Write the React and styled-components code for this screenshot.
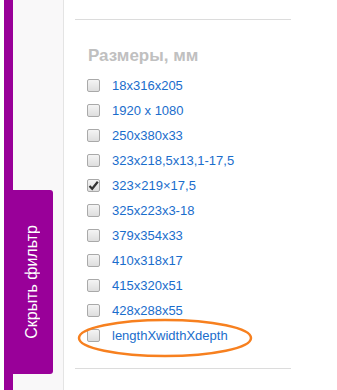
import React from "react";
import styled, { createGlobalStyle } from "styled-components";

const GlobalStyle = createGlobalStyle`
  html, body {
    margin: 0;
    padding: 0;
    background: #fff;
    font-family: "Liberation Sans", Arial, sans-serif;
  }
`;

const Page = styled.div`
  display: flex;
  height: 390px;
  padding-left: 4px;
  overflow: hidden;
`;

const Sidebar = styled.div`
  display: flex;
  flex-direction: column;
  width: 50px;
  border-left: 9px solid #990099;
  border-right: 1px solid #e4e4e4;
  background: #f9f8f9;
`;

const HideTab = styled.div`
  display: flex;
  align-items: center;
  justify-content: center;
  margin-top: 190px;
  width: 40px;
  height: 184px;
  background: #990099;
  border-radius: 0 3px 3px 0;
  color: #fff;
  font-size: 16px;
  cursor: pointer;
`;

const TabLabel = styled.span`
  writing-mode: vertical-rl;
  transform: rotate(180deg);
  white-space: nowrap;
  padding-left: 2px;
`;

const Content = styled.div`
  position: relative;
  display: flex;
  flex-direction: column;
  padding: 19px 0 0 11px;
`;

const Divider = styled.div`
  width: 216px;
  height: 0;
  border-top: 1px solid #dcdcdc;
`;

const Heading = styled.h3`
  margin: 26px 0 8px 13px;
  font-size: 17px;
  line-height: 19px;
  font-weight: bold;
  color: #c0c0c0;
`;

const List = styled.ul`
  list-style: none;
  margin: 0 0 20px 0;
  padding: 0;
`;

const Row = styled.li`
  display: flex;
  align-items: center;
  height: 25px;
  padding-left: 12px;
`;

const Box = styled.span`
  display: flex;
  align-items: center;
  justify-content: center;
  box-sizing: border-box;
  width: 13px;
  height: 13px;
  border: 1px solid #a9a9a9;
  border-radius: 2px;
  background: linear-gradient(#f4f4f4, #dedede);
`;

const Label = styled.a`
  margin-left: 12px;
  font-size: 13px;
  color: #1a6dcc;
  text-decoration: none;
  white-space: nowrap;
`;

const Highlight = styled.svg`
  position: absolute;
  left: 12px;
  top: 318px;
  pointer-events: none;
`;

const sizes = [
  { name: "18x316x205" },
  { name: "1920 x 1080" },
  { name: "250x380x33" },
  { name: "323x218,5x13,1-17,5" },
  { name: "323×219×17,5", checked: true },
  { name: "325x223x3-18" },
  { name: "379x354x33" },
  { name: "410x318x17" },
  { name: "415x320x51" },
  { name: "428x288x55" },
  { name: "lengthXwidthXdepth" },
];

const Check = () => (
  <svg width="11" height="11" viewBox="0 0 11 11">
    <path d="M1.5 6 L4.2 8.8 L9.8 1.8" fill="none" stroke="#333" strokeWidth="2.2" />
  </svg>
);

export default function App() {
  return (
    <>
      <GlobalStyle />
      <Page>
        <Sidebar>
          <HideTab>
            <TabLabel>Скрыть фильтр</TabLabel>
          </HideTab>
        </Sidebar>
        <Content>
          <Divider />
          <Heading>Размеры, мм</Heading>
          <List>
            {sizes.map(s => (
              <Row key={s.name}>
                <Box>{s.checked && <Check />}</Box>
                <Label href="#">{s.name}</Label>
              </Row>
            ))}
          </List>
          <Divider />
          {/* annotation drawn over the last option */}
          <Highlight width="180" height="42" viewBox="0 0 180 42">
            <ellipse cx="89" cy="20" rx="86" ry="18" fill="none" stroke="#f7801f" strokeWidth="2.5" />
          </Highlight>
        </Content>
      </Page>
    </>
  );
}
